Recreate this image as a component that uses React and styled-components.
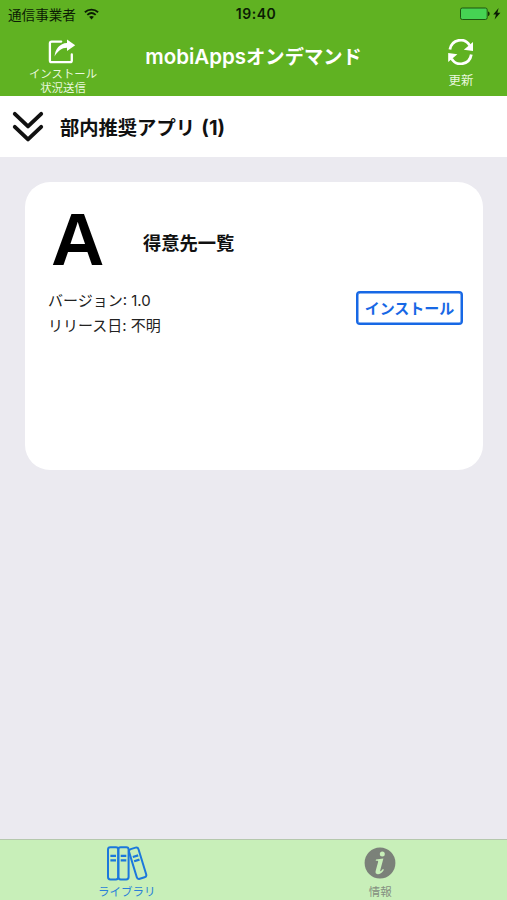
import React, { useState } from "react";
import styled, { createGlobalStyle } from "styled-components";

const tabs = [
  { id: "library", label: "ライブラリ" },
  { id: "info", label: "情報" },
];

export default function App() {
  const [activeTab, setActiveTab] = useState("library");
  const [open, setOpen] = useState(true);

  return (
    <>
      <GlobalStyle />
      <Screen>
        <Header>
          <StatusBar>
            <Carrier>
              通信事業者
              <WifiIcon />
            </Carrier>
            <Clock>19:40</Clock>
            <Power>
              <BatteryIcon />
            </Power>
          </StatusBar>
          <NavBar>
            <NavButton>
              <ShareIcon />
              <NavLabel $size="11.4px" $top="1px">
                インストール
                <br />
                状況送信
              </NavLabel>
            </NavButton>
            <Title>
              <Latin>mobiApps</Latin>オンデマンド
            </Title>
            <NavButton>
              <RefreshIcon />
              <NavLabel $size="12.4px" $top="8px">更新</NavLabel>
            </NavButton>
          </NavBar>
        </Header>
        <SectionHeader onClick={() => setOpen(!open)}>
          <ChevronIcon />
          <SectionTitle>
            部内推奨アプリ <Count>(1)</Count>
          </SectionTitle>
        </SectionHeader>
        <Content>
          {open && (
            <Card>
              <CardTop>
                <AppLogo>A</AppLogo>
                <AppName>得意先一覧</AppName>
              </CardTop>
              <CardBody>
                <Details>
                  <p>バージョン: 1.0</p>
                  <p>リリース日: 不明</p>
                </Details>
                <InstallButton>インストール</InstallButton>
              </CardBody>
            </Card>
          )}
        </Content>
        <TabBar>
          {tabs.map((tab) => (
            <Tab
              key={tab.id}
              $active={tab.id === activeTab}
              onClick={() => setActiveTab(tab.id)}
            >
              {tab.id === "library" ? <BooksIcon /> : <InfoIcon />}
              <TabLabel>{tab.label}</TabLabel>
            </Tab>
          ))}
        </TabBar>
      </Screen>
    </>
  );
}

function WifiIcon() {
  return (
    <svg width="15" height="12" viewBox="0 0 15 12" fill="none" stroke="#0b1c04" strokeWidth="1.9">
      <path d="M0.9 4.3C4.7 .7 10.3 .7 14.1 4.3" />
      <path d="M3.3 6.9C5.8 4.7 9.2 4.7 11.7 6.9" />
      <path d="M5.1 8.8C6.5 7.6 8.5 7.6 9.9 8.8L7.5 11.4Z" fill="#0b1c04" stroke="none" />
    </svg>
  );
}

function BatteryIcon() {
  return (
    <svg width="43" height="14" viewBox="0 0 43 14">
      <rect x="1.5" y="1" width="26.7" height="11.5" rx="1.8" fill="#46d353" stroke="#1f5510" strokeWidth="1" />
      <path d="M29 4.6C31.2 4.8 31.2 8.8 29 9Z" fill="#14300a" />
      <path d="M39.6 1L34.2 7.4H37L35.6 12.4L41.4 5.8H38.4Z" fill="#0b1c04" />
    </svg>
  );
}

function ShareIcon() {
  return (
    <svg width="30" height="26" viewBox="0 0 30 26" fill="none">
      <path
        d="M13.2 2.6H3.6Q1.9 2.6 1.9 4.3V21.5Q1.9 23.2 3.6 23.2H22Q23.8 23.2 23.8 21.5V15.5"
        stroke="#fff"
        strokeWidth="2.3"
        strokeLinecap="round"
      />
      <path
        d="M19 .4L27.2 6.2L19 12V8.8C13.8 8.8 10 11.8 6.6 17.4C7.1 10 11.8 4.2 19 3.9Z"
        fill="#fff"
      />
    </svg>
  );
}

function RefreshIcon() {
  return (
    <svg width="26" height="26" viewBox="0 0 26 26" fill="none">
      <path d="M1.9 10.6C3.6 .2 16.8 -2 21.6 6.4" stroke="#fff" strokeWidth="2.8" />
      <path d="M23.3 15.4C21.6 25.8 8.4 28 3.6 19.6" stroke="#fff" strokeWidth="2.8" />
      <path d="M25 3V12L15.8 10.8Z" fill="#fff" />
      <path d="M0.2 23V14L9.4 15.2Z" fill="#fff" />
    </svg>
  );
}

function ChevronIcon() {
  return (
    <svg
      width="32"
      height="32"
      viewBox="0 0 32 32"
      fill="none"
      stroke="#111"
      strokeWidth="3.9"
      strokeLinecap="round"
      strokeLinejoin="round"
    >
      <path d="M2.8 2.8L16 15.4L29.2 2.8" />
      <path d="M2.8 15.8L16 28.4L29.2 15.8" />
    </svg>
  );
}

function BooksIcon() {
  return (
    <svg width="42" height="37" viewBox="0 0 42 37" fill="none" stroke="#1b78dc" strokeWidth="2">
      <rect x="2" y="2.2" width="10.3" height="32.2" rx="2.4" />
      <path d="M4.4 10.8H10M4.4 15.4H10" strokeWidth="2.2" />
      <rect x="12.3" y="2.2" width="10.3" height="32.2" rx="2.4" />
      <path d="M14.7 10.8H20.3M14.7 15.4H20.3" strokeWidth="2.2" />
      <g transform="rotate(-17 32 18)">
        <rect x="26.7" y="2.6" width="9.8" height="31" rx="2.4" />
        <path d="M28.8 10.8H34.4M28.8 15.2H34.4" strokeWidth="2.2" />
      </g>
    </svg>
  );
}

function InfoIcon() {
  return (
    <svg width="32" height="37" viewBox="0 0 32 37">
      <circle cx="16" cy="18" r="15.4" fill="#7b8179" />
      <circle cx="18.3" cy="9" r="2.5" fill="#c8efb9" />
      <path
        d="M12 14.6L19.4 13.5L16.2 25.5C15.9 26.8 16.7 26.8 18.9 23.9L20 24.7C17.6 28.3 15.7 29.3 13.7 29.2C11.7 29.1 11.2 27.7 11.7 25.8L14.1 17.1C14.5 15.7 13.4 15.7 11.7 15.8Z"
        fill="#c8efb9"
      />
    </svg>
  );
}

const GlobalStyle = createGlobalStyle`
  * {
    box-sizing: border-box;
    margin: 0;
    padding: 0;
  }
  body {
    font-family: "Noto Sans CJK JP", sans-serif;
    color: #111;
  }
  button {
    border: none;
    background: none;
    font-family: inherit;
    color: inherit;
    cursor: pointer;
  }
  svg {
    display: block;
    flex-shrink: 0;
  }
`;

const Screen = styled.div`
  display: flex;
  flex-direction: column;
  width: 507px;
  height: 900px;
  overflow: hidden;
  background-color: #ebeaf0;
`;

const Header = styled.header`
  height: 96px;
  flex-shrink: 0;
  background-color: #60b222;
`;

const StatusBar = styled.div`
  display: grid;
  grid-template-columns: 1fr auto 1fr;
  align-items: center;
  height: 27px;
  padding: 0 5px 0 8px;
  color: #0b1c04;
`;

const Carrier = styled.div`
  display: flex;
  align-items: center;
  gap: 8px;
  font-size: 13.6px;
  line-height: 18px;
  white-space: nowrap;
`;

const Clock = styled.div`
  padding-left: 2px;
  font-family: Inter, sans-serif;
  font-size: 14px;
  font-weight: 600;
  letter-spacing: 0.5px;
`;

const Power = styled.div`
  display: flex;
  justify-content: flex-end;
`;

const NavBar = styled.nav`
  display: grid;
  grid-template-columns: 92px 1fr 92px;
  height: 69px;
  padding-left: 17px;
`;

const NavButton = styled.button`
  display: flex;
  flex-direction: column;
  align-items: center;
  padding-top: 12px;
  color: #e9f8df;
`;

const NavLabel = styled.span`
  margin-top: ${({ $top }) => $top};
  font-size: ${({ $size }) => $size};
  line-height: 14px;
  text-align: center;
  white-space: nowrap;
`;

const Title = styled.h1`
  padding: 15px 17px 0 0;
  font-size: 19.3px;
  font-weight: 700;
  line-height: 28px;
  text-align: center;
  white-space: nowrap;
  color: #fff;
`;

const Latin = styled.span`
  font-family: Inter, sans-serif;
  font-size: 20.5px;
  font-weight: 600;
`;

const SectionHeader = styled.div`
  display: flex;
  align-items: center;
  gap: 16px;
  height: 61px;
  flex-shrink: 0;
  padding-left: 12px;
  background-color: #fff;
  cursor: pointer;
`;

const SectionTitle = styled.h2`
  padding-top: 1px;
  font-size: 19.3px;
  font-weight: 700;
  line-height: 28px;
  white-space: nowrap;
`;

const Count = styled.span`
  margin-left: 2px;
  font-family: Inter, sans-serif;
  font-size: 20px;
`;

const Content = styled.main`
  flex: 1;
  padding: 25px 24px 0 25px;
`;

const Card = styled.section`
  height: 288px;
  padding: 24px 20px 0 23px;
  border-radius: 25px;
  background-color: #fff;
`;

const CardTop = styled.div`
  display: flex;
  align-items: center;
  height: 70px;
`;

const AppLogo = styled.div`
  width: 95px;
  height: 70px;
  padding-left: 3px;
  font-family: "Liberation Sans", Arial, sans-serif;
  font-size: 74px;
  font-weight: 700;
  line-height: 68px;
  color: #000;
`;

const AppName = styled.h3`
  padding-top: 2px;
  font-size: 18.3px;
  font-weight: 700;
  line-height: 26px;
`;

const CardBody = styled.div`
  display: flex;
  justify-content: space-between;
  align-items: flex-start;
  padding-top: 13px;
`;

const Details = styled.div`
  font-family: Inter, "Noto Sans CJK JP", sans-serif;
  font-size: 15px;
  line-height: 24.5px;
  color: #222;
`;

const InstallButton = styled.button`
  width: 107px;
  height: 34px;
  margin-top: 2px;
  border: 2px solid #1768e5;
  border-radius: 4px;
  box-shadow: inset 0 0 0 0.5px #1768e5;
  font-size: 15px;
  font-weight: 700;
  line-height: 28px;
  white-space: nowrap;
  color: #1768e5;
`;

const TabBar = styled.footer`
  display: grid;
  grid-template-columns: 1fr 1fr;
  height: 61px;
  flex-shrink: 0;
  border-top: 1px solid #b5c8ad;
  background-color: #c8efb9;
`;

const Tab = styled.button`
  display: flex;
  flex-direction: column;
  align-items: center;
  padding-top: 5px;
  color: ${({ $active }) => ($active ? "#2a7fd8" : "#858f81")};
`;

const TabLabel = styled.span`
  margin-top: 2px;
  font-size: 11.5px;
  line-height: 14px;
`;
